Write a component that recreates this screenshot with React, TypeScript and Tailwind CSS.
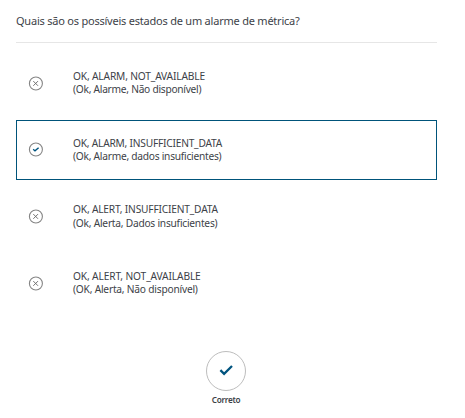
type Option = { state: string; translation: string; correct?: boolean; stateTracking: string; translationTracking: string };

const options: Option[] = [
  { state: 'OK, ALARM, NOT_AVAILABLE', translation: '(Ok, Alarme, Não disponível)', stateTracking: 'tracking-[-0.16px]', translationTracking: 'tracking-[-0.26px]' },
  { state: 'OK, ALARM, INSUFFICIENT_DATA', translation: '(Ok, Alarme, dados insuficientes)', correct: true, stateTracking: 'tracking-[-0.22px]', translationTracking: 'tracking-[-0.25px]' },
  { state: 'OK, ALERT, INSUFFICIENT_DATA', translation: '(Ok, Alerta, Dados insuficientes)', stateTracking: 'tracking-[-0.19px]', translationTracking: 'tracking-[-0.23px]' },
  { state: 'OK, ALERT, NOT_AVAILABLE', translation: '(OK, Alerta, Não disponível)', stateTracking: 'tracking-[-0.13px]', translationTracking: 'tracking-[-0.21px]' },
];

function StatusIcon({ correct }: { correct?: boolean }) {
  return (
    <svg className="size-[15px] shrink-0" viewBox="0 0 15 15" fill="none">
      <circle cx="7.9" cy="7.5" r="6.5" stroke="#858585" strokeWidth="1.1" />
      {correct ? (
        <path d="M5.2 7.3 7 8.9 10.6 5.8" stroke="#00547f" strokeWidth="1.4" />
      ) : (
        <path d="M5.3 5.1 10 9.8M10 5.1 5.3 9.8" stroke="#6b6b6b" strokeWidth="0.95" />
      )}
    </svg>
  );
}

function OptionRow({ option }: { option: Option }) {
  return (
    <li className={`flex h-[60px] items-center border pl-[11px] ${option.correct ? 'border-[#00547a]' : 'border-transparent'}`}>
      <StatusIcon correct={option.correct} />
      <div className="ml-[30px] text-[10.2px] leading-[13.33px] whitespace-nowrap">
        <p><span className={option.stateTracking}>{option.state}</span></p>
        <p><span className={option.translationTracking}>{option.translation}</span></p>
      </div>
    </li>
  );
}

export default function App() {
  return (
    <main className="h-[418px] w-[465px] overflow-hidden bg-white pr-7 pl-4 font-['Noto_Sans',sans-serif] text-[#3d4248]">
      <h1 className="h-[43px] border-b border-[#e6e6e6] pt-3 text-[11px] leading-[18px] font-normal whitespace-nowrap">
        <span className="tracking-[-0.22px]">Quais são os possíveis estados de um alarme de métrica?</span>
      </h1>
      <ul className="flex flex-col gap-[6.67px] pt-[10.33px]">
        {options.map((option) => (
          <OptionRow key={option.state} option={option} />
        ))}
      </ul>
      <div className="mt-[37.6px] flex flex-col items-center pr-px">
        <div className="flex size-10 items-center justify-center rounded-full border border-[#bdbdbd]">
          <svg className="h-[11px] w-[14px]" viewBox="0 0 14 11" fill="none">
            <path d="M1.4 5.1 5.1 8.8 13 1" stroke="#00547f" strokeWidth="2.3" />
          </svg>
        </div>
        <p className="mt-[3px] text-[8.2px] leading-3 font-semibold tracking-[-0.25px]">Correto</p>
      </div>
    </main>
  );
}
